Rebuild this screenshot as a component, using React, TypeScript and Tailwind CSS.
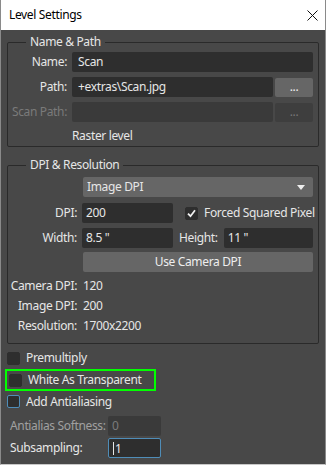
import React from "react";

const font = { fontFamily: '"Noto Sans", "DejaVu Sans", sans-serif' };

function Input({ value, className = "", disabled = false }: { value: string; className?: string; disabled?: boolean }) {
  return (
    <div
      className={`h-[20px] rounded-[2px] flex items-center px-[6px] min-w-0 ${
        disabled ? "bg-[#3a3a3a] text-[#7a7a7a]" : "bg-[#2e2e2e] text-[#e6e6e6]"
      } ${className}`}
    >
      {value}
    </div>
  );
}

function Btn({ children, className = "", disabled = false }: { children: React.ReactNode; className?: string; disabled?: boolean }) {
  return (
    <div
      className={`h-[19px] rounded-[2px] flex items-center justify-center ${
        disabled ? "bg-[#3e3e3e] text-[#777]" : "bg-[#666666] text-[#eeeeee]"
      } ${className}`}
    >
      {children}
    </div>
  );
}

function Box({ checked = false, blue = false }: { checked?: boolean; blue?: boolean }) {
  return (
    <div
      className={`w-[13px] h-[13px] shrink-0 rounded-[2px] bg-[#2e2e2e] flex items-center justify-center ${
        blue ? "border border-[#4f8db8]" : "border border-[#2e2e2e]"
      }`}
    >
      {checked && (
        <svg width="9" height="9" viewBox="0 0 9 9">
          <path d="M1 4.6 L3.5 7.2 L8 1.3" stroke="#f2f2f2" strokeWidth="1.8" fill="none" />
        </svg>
      )}
    </div>
  );
}

export default function App() {
  return (
    <div
      style={font}
      className="w-[326px] h-[465px] bg-[#484848] border-x border-[#8a8a8a] border-b border-b-[#c8c8c8] flex flex-col text-[12px] tracking-[-0.35px] text-[#e6e6e6] overflow-hidden"
    >
      <div className="h-[30px] bg-white flex items-center justify-between pl-[8px] pr-[7px] text-black shrink-0">
        <span className="text-[12px]">Level Settings</span>
        <svg width="11" height="11" viewBox="0 0 11 11">
          <path d="M0.5 0.5 L10.5 10.5 M10.5 0.5 L0.5 10.5" stroke="#111" strokeWidth="1" />
        </svg>
      </div>

      <div className="px-[6px] flex flex-col">
        <fieldset className="mt-[4px] border border-[#2a2a2a] rounded-[2px] pl-0 pr-[5px] pb-[1px] pt-0 m-0 min-w-0">
          <legend className="ml-[18px] px-[4px] leading-[16px]">Name &amp; Path</legend>
          <div className="grid grid-cols-[59px_minmax(0,1fr)] gap-x-[5px] gap-y-[5px] items-center mt-[2px]">
            <div className="text-right">Name:</div>
            <Input value="Scan" />
            <div className="text-right">Path:</div>
            <div className="flex items-center gap-[2px] min-w-0">
              <Input value="+extras\Scan.jpg" className="flex-1" />
              <Btn className="w-[38px] h-[18px]">...</Btn>
            </div>
            <div className="text-right text-[#7a7a7a] whitespace-nowrap">Scan Path:</div>
            <div className="flex items-center gap-[2px] min-w-0">
              <Input value="" disabled className="flex-1" />
              <Btn disabled className="w-[38px] h-[18px]">...</Btn>
            </div>
            <div />
            <div className="h-[18px] flex items-center">Raster level</div>
          </div>
        </fieldset>

        <fieldset className="mt-[10px] border border-[#2a2a2a] rounded-[2px] pl-0 pr-[5px] pb-[7px] pt-0 m-0 min-w-0">
          <legend className="ml-[18px] px-[4px] leading-[16px]">DPI &amp; Resolution</legend>
          <div className="grid grid-cols-[69px_minmax(0,1fr)] gap-x-[5px] items-center mt-[4px]">
            <div />
            <div className="h-[20px] rounded-[2px] bg-[#666666] flex items-center justify-between pl-[4px] pr-[8px] ml-[1px]">
              <span>Image DPI</span>
              <svg width="8" height="5" viewBox="0 0 8 5">
                <path d="M0 0 L8 0 L4 5 Z" fill="#eeeeee" />
              </svg>
            </div>
            <div className="text-right mt-[6px]">DPI:</div>
            <div className="flex items-center mt-[6px] min-w-0">
              <Input value="200" className="w-[91px] pl-[4px] shrink-0" />
              <div className="ml-[12px]">
                <Box checked />
              </div>
              <span className="ml-[6px] whitespace-nowrap">Forced Squared Pixel</span>
            </div>
            <div className="text-right mt-[5px]">Width:</div>
            <div className="flex items-center mt-[5px] min-w-0">
              <Input value={'8.5 "'} className="w-[91px] pl-[4px] shrink-0" />
              <span className="ml-[6px]">Height:</span>
              <Input value={'11 "'} className="flex-1 ml-[6px] pl-[4px]" />
            </div>
            <div />
            <Btn className="h-[20px] ml-[1px] mt-[4px]">Use Camera DPI</Btn>
          </div>
          <div className="grid grid-cols-[69px_minmax(0,1fr)] gap-x-[6px] mt-[4px] leading-[20px]">
            <div className="text-right whitespace-nowrap">Camera DPI:</div>
            <div>120</div>
            <div className="text-right whitespace-nowrap">Image DPI:</div>
            <div>200</div>
            <div className="text-right whitespace-nowrap">Resolution:</div>
            <div>1700x2200</div>
          </div>
        </fieldset>

        <div className="mt-[3px] flex flex-col">
          <div className="h-[22px] flex items-center gap-[6px]">
            <Box />
            <span>Premultiply</span>
          </div>
          <div className="h-[22px] w-[151px] -ml-[2px] pl-[2px] border-2 border-[#00ff00] flex items-center gap-[6px]">
            <Box />
            <span>White As Transparent</span>
          </div>
          <div className="h-[21px] flex items-center gap-[6px]">
            <Box blue />
            <span>Add Antialiasing</span>
          </div>
          <div className="mt-[4px] flex items-center pl-[3px]">
            <span className="w-[98px] text-[#a0a0a0] whitespace-nowrap">Antialias Softness:</span>
            <Input value="0" disabled className="w-[53px] pl-[4px] text-[#6a6a6a]" />
          </div>
          <div className="mt-[2px] flex items-center pl-[3px]">
            <span className="w-[98px] whitespace-nowrap">Subsampling:</span>
            <div className="w-[53px] h-[20px] rounded-[2px] bg-[#2e2e2e] border border-[#4f8db8] flex items-center pl-[4px]">
              <span className="border-l border-[#e6e6e6] h-[13px] leading-[13px] pl-[1px]">1</span>
            </div>
          </div>
        </div>
      </div>
    </div>
  );
}
